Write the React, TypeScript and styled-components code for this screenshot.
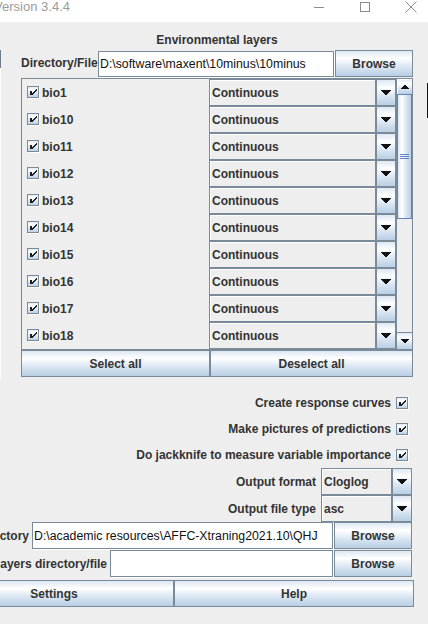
import React from "react";
import styled, { createGlobalStyle } from "styled-components";

const BORDER = "#7a8a99";
const OCEAN_V =
  "linear-gradient(to bottom, #dde8f3 0%, #ffffff 30%, #dde8f3 60%, #b8cfe5 100%)";
const OCEAN_H =
  "linear-gradient(to right, #dde8f3 0%, #ffffff 30%, #dde8f3 60%, #b8cfe5 100%)";

const GlobalStyle = createGlobalStyle`
  html, body { margin: 0; padding: 0; background: #eeeeee; }
  body { font-family: "Liberation Sans", Arial, sans-serif; overflow: hidden; }
  #root { width: 428px; height: 624px; }
`;

const Frame = styled.div`
  width: 428px;
  height: 624px;
  overflow: hidden;
  background: #eeeeee;
  display: flex;
  flex-direction: column;
  color: #333333;
  font-family: "Liberation Sans", Arial, sans-serif;
`;

/* ---------- title bar ---------- */
const TitleBar = styled.div`
  height: 22px;
  flex: none;
  background: #ffffff;
  display: flex;
  overflow: hidden;
`;
const TitleClip = styled.div`
  width: 70px;
  flex: none;
  display: flex;
  justify-content: flex-end;
  overflow: hidden;
`;
const TitleText = styled.span`
  white-space: nowrap;
  font-size: 13px;
  line-height: 14px;
  color: #9b9b9b;
`;
const WinControls = styled.div`
  display: flex;
  flex: none;
  margin-left: 226px;
`;
const WinButton = styled.div`
  width: 46px;
  height: 22px;
  flex: none;
  box-sizing: border-box;
  padding-top: 1px;
  display: flex;
  justify-content: center;
  align-items: flex-start;
`;

/* ---------- upper ---------- */
const Upper = styled.div`
  display: flex;
  height: 356px;
  flex: none;
`;
const EdgeStrip = styled.div`
  width: 1px;
  flex: none;
  display: flex;
  flex-direction: column;
  padding-top: 28px;
`;
const EdgeDark = styled.div`
  height: 18px;
  background: #6f7d8a;
`;
const EdgeLight = styled.div`
  flex: 1;
  background: #ffffff;
`;
const UpperContent = styled.div`
  width: 392px;
  margin-left: 20px;
  flex: none;
  display: flex;
  flex-direction: column;
`;
const StrayMark = styled.div`
  width: 1px;
  height: 35px;
  margin-top: 61px;
  margin-left: auto;
  background: #111111;
`;
const SectionTitle = styled.div`
  padding-top: 11px;
  line-height: 15px;
  font-weight: 700;
  font-size: 12px;
  text-align: center;
`;
const FileRow = styled.div`
  display: flex;
  height: 28px;
  margin-top: 2px;
  align-items: flex-start;
  flex: none;
`;
const FileLabel = styled.div`
  width: 77px;
  flex: none;
  font-weight: 700;
  font-size: 12px;
  line-height: 27px;
  white-space: nowrap;
`;
const TextField = styled.div<{ $w: number; $h: number; $mt?: number }>`
  width: ${(p) => p.$w}px;
  height: ${(p) => p.$h}px;
  margin-top: ${(p) => p.$mt ?? 0}px;
  flex: none;
  box-sizing: border-box;
  border: 1px solid ${BORDER};
  box-shadow: 1px 1px 0 #ffffff;
  background: #ffffff;
  padding-left: 1px;
  display: flex;
  align-items: center;
  font-size: 12.3px;
  color: #111111;
  white-space: nowrap;
  overflow: hidden;
`;
const Button = styled.button<{ $w: number }>`
  box-sizing: border-box;
  width: ${(p) => p.$w}px;
  height: 27px;
  flex: none;
  margin: 0;
  padding: 0;
  border: 1px solid ${BORDER};
  background: ${OCEAN_V};
  font-family: "Liberation Sans", Arial, sans-serif;
  font-weight: 700;
  font-size: 12px;
  color: #333333;
  display: flex;
  align-items: center;
  justify-content: center;
`;
const BrowseButton = styled(Button)`
  margin-left: 1px;
`;
const SettingsButton = styled(Button)`
  margin-left: -66px;
`;

/* ---------- list ---------- */
const LayerList = styled.div`
  height: 272px;
  flex: none;
  box-sizing: border-box;
  border: 1px solid ${BORDER};
  display: flex;
`;
const Rows = styled.div`
  width: 374px;
  flex: none;
  overflow: hidden;
  display: flex;
  flex-direction: column;
`;
const LayerRow = styled.div`
  height: 27px;
  flex: none;
  display: flex;
`;
const CheckCell = styled.div`
  width: 187px;
  flex: none;
  box-sizing: border-box;
  padding-left: 5px;
  display: flex;
  align-items: center;
  gap: 2px;
  font-weight: 700;
  font-size: 12px;
`;
const Combo = styled.div<{ $w: number }>`
  width: ${(p) => p.$w}px;
  height: 27px;
  flex: none;
  display: flex;
`;
const ComboField = styled.div`
  flex: 1;
  min-width: 0;
  box-sizing: border-box;
  border: 1px solid ${BORDER};
  box-shadow: inset 1px 1px 0 #ffffff;
  background: #eeeeee;
  padding-left: 2px;
  display: flex;
  align-items: center;
  font-weight: 700;
  font-size: 12px;
  color: #333333;
  white-space: nowrap;
  overflow: hidden;
`;
const ComboArrow = styled.div`
  width: 20px;
  flex: none;
  box-sizing: border-box;
  border: 1px solid ${BORDER};
  background: ${OCEAN_V};
  display: flex;
  align-items: center;
  justify-content: center;
`;
const ScrollBar = styled.div`
  width: 16px;
  flex: none;
  box-sizing: border-box;
  border-left: 1px solid ${BORDER};
  background: #eeeeee;
  display: flex;
  flex-direction: column;
`;
const ScrollUp = styled.div`
  height: 15px;
  flex: none;
  background: ${OCEAN_V};
  box-shadow: inset 1px 1px 0 #ffffff;
  display: flex;
  align-items: center;
  justify-content: center;
`;
const ScrollDown = styled.div`
  height: 17px;
  flex: none;
  box-sizing: border-box;
  border-top: 1px solid ${BORDER};
  background: ${OCEAN_V};
  display: flex;
  align-items: center;
  justify-content: center;
`;
const Thumb = styled.div`
  height: 125px;
  flex: none;
  box-sizing: border-box;
  border: 1px solid #6382bf;
  background: ${OCEAN_H};
  display: flex;
  align-items: center;
  justify-content: center;
`;
const Grip = styled.div`
  width: 9px;
  height: 5px;
  background: repeating-linear-gradient(
    to bottom,
    #6382bf 0px,
    #6382bf 1px,
    transparent 1px,
    transparent 2px
  );
`;
const Track = styled.div`
  flex: 1;
`;
const ButtonRow = styled.div`
  display: flex;
  flex: none;
`;

/* ---------- lower ---------- */
const Lower = styled.div`
  display: flex;
  flex-direction: column;
  padding-top: 12px;
  flex: none;
`;
const OptionRow = styled.div`
  height: 26px;
  flex: none;
  display: flex;
  align-items: center;
  justify-content: flex-end;
  gap: 5px;
  padding-right: 19px;
  font-weight: 700;
  font-size: 12px;
  white-space: nowrap;
`;
const SelectRow = styled.div`
  height: 27px;
  flex: none;
  display: flex;
  align-items: center;
  justify-content: flex-end;
  gap: 5px;
  padding-right: 16px;
  font-weight: 700;
  font-size: 12px;
  white-space: nowrap;
`;
const PathRow = styled.div<{ $mt: number }>`
  height: 27px;
  flex: none;
  margin-top: ${(p) => p.$mt}px;
  display: flex;
  padding-right: 16px;
`;
const PathLabel = styled.div`
  flex: 1;
  min-width: 0;
  margin-right: 3px;
  display: flex;
  justify-content: flex-end;
  align-items: center;
  overflow: hidden;
  white-space: nowrap;
  font-weight: 700;
  font-size: 12px;
`;
const BottomRow = styled.div`
  display: flex;
  flex: none;
  margin-top: 3px;
`;

/* ---------- drawings ---------- */
const CheckIcon: React.FC = () => (
  <svg width="13" height="13" viewBox="0 0 13 13" shapeRendering="crispEdges" style={{ flex: "none" }}>
    <defs>
      <linearGradient id="cbgrad" x1="0" y1="0" x2="0" y2="1">
        <stop offset="0" stopColor="#dde8f3" />
        <stop offset="0.3" stopColor="#ffffff" />
        <stop offset="0.6" stopColor="#dde8f3" />
        <stop offset="1" stopColor="#b8cfe5" />
      </linearGradient>
    </defs>
    <rect x="1.5" y="1.5" width="11" height="11" fill="none" stroke="#ffffff" />
    <rect x="0.5" y="0.5" width="11" height="11" fill="url(#cbgrad)" stroke={BORDER} />
    <path
      fill="#1e1e1e"
      d="M3 5h2v4H3z M9 3h1v2H9z M8 4h1v2H8z M7 5h1v2H7z M6 6h1v2H6z M5 7h1v2H5z"
    />
  </svg>
);

const ComboArrowIcon: React.FC = () => (
  <svg width="10" height="5" viewBox="0 0 10 5" shapeRendering="crispEdges">
    <path fill="#111" d="M0 0h10v1H0z M1 1h8v1H1z M2 2h6v1H2z M3 3h4v1H3z M4 4h2v1H4z" />
  </svg>
);

const UpArrowIcon: React.FC = () => (
  <svg width="8" height="4" viewBox="0 0 8 4" shapeRendering="crispEdges">
    <path fill="#111" d="M3 0h2v1H3z M2 1h4v1H2z M1 2h6v1H1z M0 3h8v1H0z" />
  </svg>
);

const DownArrowIcon: React.FC = () => (
  <svg width="8" height="4" viewBox="0 0 8 4" shapeRendering="crispEdges">
    <path fill="#111" d="M0 0h8v1H0z M1 1h6v1H1z M2 2h4v1H2z M3 3h2v1H3z" />
  </svg>
);

const MinIcon = () => (
  <svg width="10" height="12" viewBox="0 0 10 12" shapeRendering="crispEdges">
    <line x1="0" y1="6.5" x2="10" y2="6.5" stroke="#8c8c8c" strokeWidth="1" />
  </svg>
);
const MaxIcon = () => (
  <svg width="10" height="12" viewBox="0 0 10 12" shapeRendering="crispEdges">
    <rect x="0.5" y="1.5" width="9" height="9" fill="none" stroke="#8c8c8c" strokeWidth="1" />
  </svg>
);
const CloseIcon = () => (
  <svg width="12" height="12" viewBox="0 0 12 12">
    <path d="M0.5 0.5L11.5 11.5M11.5 0.5L0.5 11.5" stroke="#8c8c8c" strokeWidth="1" />
  </svg>
);

const SelectBox: React.FC<{ w: number; value: string }> = ({ w, value }) => (
  <Combo $w={w}>
    <ComboField>{value}</ComboField>
    <ComboArrow>
      <ComboArrowIcon />
    </ComboArrow>
  </Combo>
);

const layers = [
  "bio1", "bio10", "bio11", "bio12", "bio13", "bio14", "bio15", "bio16", "bio17", "bio18", "bio19",
];

export default function App() {
  return (
    <Frame>
      <GlobalStyle />
      <TitleBar>
        <TitleClip>
          <TitleText>Maximum Entropy Species Distribution Modeling, Version 3.4.4</TitleText>
        </TitleClip>
        <WinControls>
          <WinButton><MinIcon /></WinButton>
          <WinButton><MaxIcon /></WinButton>
          <WinButton><CloseIcon /></WinButton>
        </WinControls>
      </TitleBar>

      <Upper>
        <EdgeStrip>
          <EdgeDark />
          <EdgeLight />
        </EdgeStrip>
        <UpperContent>
          <SectionTitle>Environmental layers</SectionTitle>
          <FileRow>
            <FileLabel>Directory/File</FileLabel>
            <TextField $w={236} $h={26} $mt={1}>D:\software\maxent\10minus\10minus</TextField>
            <BrowseButton $w={78}>Browse</BrowseButton>
          </FileRow>
          <LayerList>
            <Rows>
              {layers.map((name) => (
                <LayerRow key={name}>
                  <CheckCell>
                    <CheckIcon />
                    <span>{name}</span>
                  </CheckCell>
                  <SelectBox w={187} value="Continuous" />
                </LayerRow>
              ))}
            </Rows>
            <ScrollBar>
              <ScrollUp><UpArrowIcon /></ScrollUp>
              <Thumb><Grip /></Thumb>
              <Track />
              <ScrollDown><DownArrowIcon /></ScrollDown>
            </ScrollBar>
          </LayerList>
          <ButtonRow>
            <Button $w={189}>Select all</Button>
            <Button $w={203}>Deselect all</Button>
          </ButtonRow>
        </UpperContent>
        <StrayMark />
      </Upper>

      <Lower>
        <OptionRow>
          <span>Create response curves</span>
          <CheckIcon />
        </OptionRow>
        <OptionRow>
          <span>Make pictures of predictions</span>
          <CheckIcon />
        </OptionRow>
        <OptionRow>
          <span>Do jackknife to measure variable importance</span>
          <CheckIcon />
        </OptionRow>
        <SelectRow>
          <span>Output format</span>
          <SelectBox w={91} value="Cloglog" />
        </SelectRow>
        <SelectRow>
          <span>Output file type</span>
          <SelectBox w={91} value="asc" />
        </SelectRow>
        <PathRow $mt={0}>
          <PathLabel>Output directory</PathLabel>
          <TextField $w={301} $h={27}>D:\academic resources\AFFC-Xtraning2021.10\QHJ</TextField>
          <BrowseButton $w={78}>Browse</BrowseButton>
        </PathRow>
        <PathRow $mt={1}>
          <PathLabel>Projection layers directory/file</PathLabel>
          <TextField $w={223} $h={27}></TextField>
          <BrowseButton $w={78}>Browse</BrowseButton>
        </PathRow>
        <BottomRow>
          <SettingsButton $w={240}>Settings</SettingsButton>
          <Button $w={240}>Help</Button>
        </BottomRow>
      </Lower>
    </Frame>
  );
}
